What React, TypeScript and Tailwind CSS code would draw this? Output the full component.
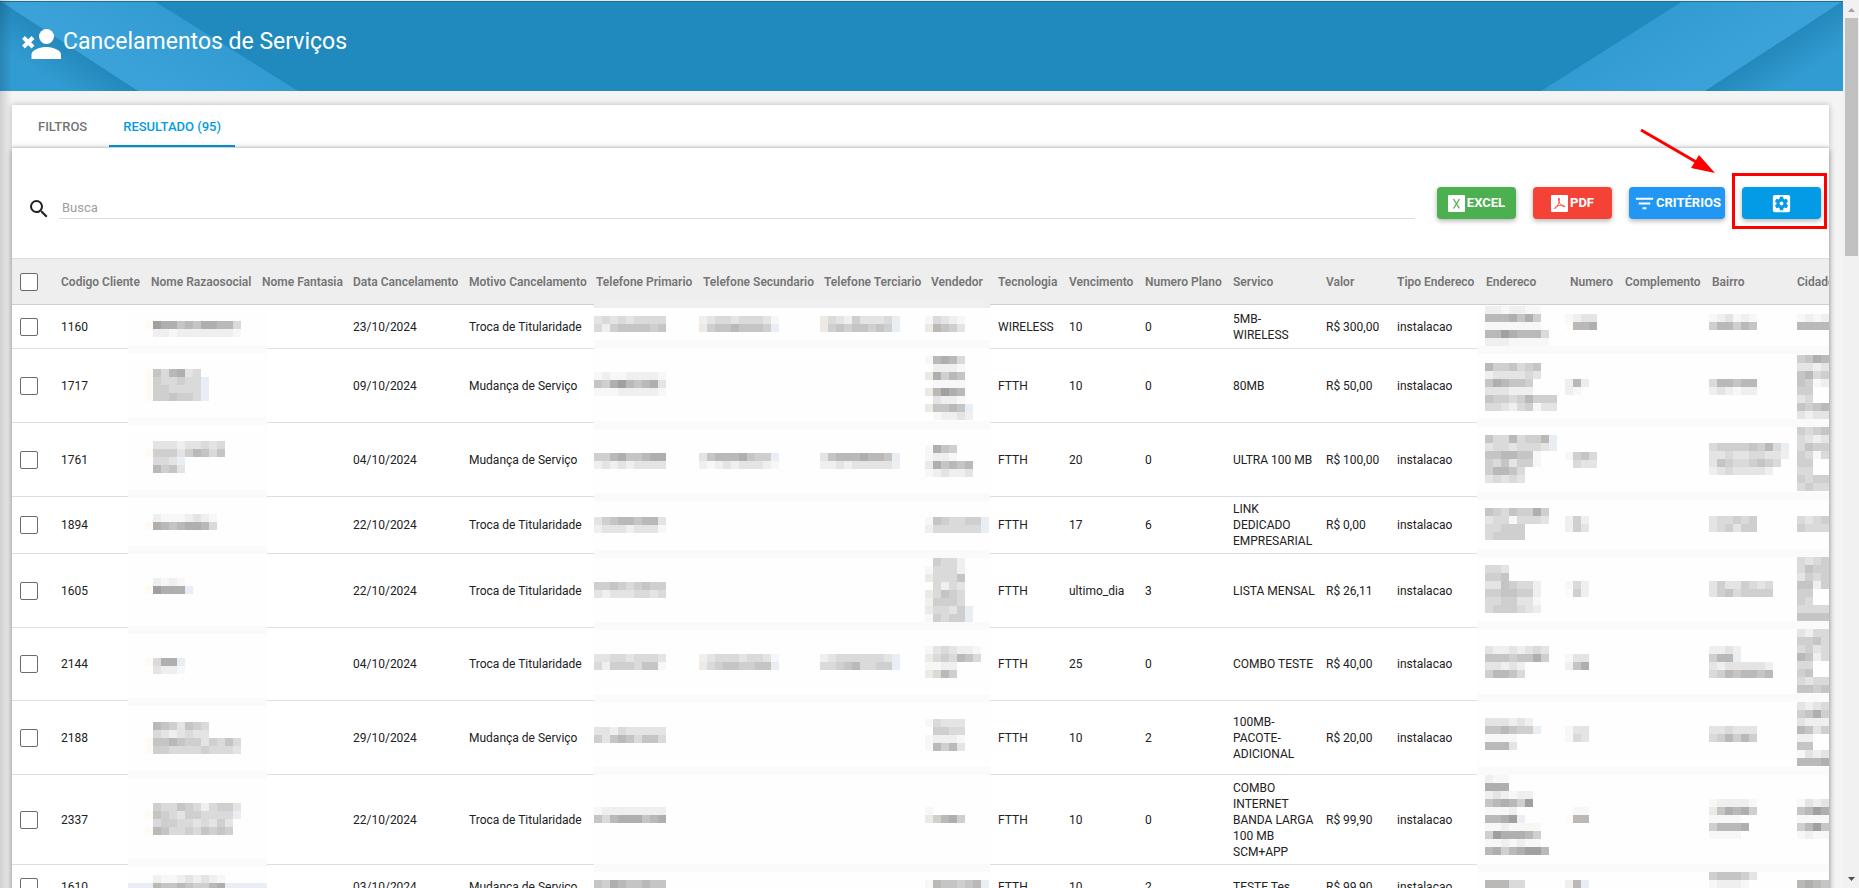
import { useState } from 'react';
import { MdFilterList, MdSearch, MdSettingsApplications } from 'react-icons/md';

interface Column {
  label: string;
  width: string;
}

interface Row {
  codigo: string;
  data: string;
  motivo: string;
  tecnologia: string;
  vencimento: string;
  plano: string;
  servico: string;
  valor: string;
  height: string;
}

const columns: Column[] = [
  { label: 'Codigo Cliente', width: 'w-[90px]' },
  { label: 'Nome Razaosocial', width: 'w-[111px]' },
  { label: 'Nome Fantasia', width: 'w-[91px]' },
  { label: 'Data Cancelamento', width: 'w-[116px]' },
  { label: 'Motivo Cancelamento', width: 'w-[127px]' },
  { label: 'Telefone Primario', width: 'w-[107px]' },
  { label: 'Telefone Secundario', width: 'w-[121px]' },
  { label: 'Telefone Terciario', width: 'w-[107px]' },
  { label: 'Vendedor', width: 'w-[67px]' },
  { label: 'Tecnologia', width: 'w-[71px]' },
  { label: 'Vencimento', width: 'w-[76px]' },
  { label: 'Numero Plano', width: 'w-[88px]' },
  { label: 'Servico', width: 'w-[93px]' },
  { label: 'Valor', width: 'w-[71px]' },
  { label: 'Tipo Endereco', width: 'w-[89px]' },
  { label: 'Endereco', width: 'w-[84px]' },
  { label: 'Numero', width: 'w-[55px]' },
  { label: 'Complemento', width: 'w-[87px]' },
  { label: 'Bairro', width: 'w-[85px]' },
  { label: 'Cidade', width: 'w-[70px]' },
];

const TROCA = 'Troca de Titularidade';
const MUDANCA = 'Mudança de Serviço';

const rows: Row[] = [
  { codigo: '1160', data: '23/10/2024', motivo: TROCA, tecnologia: 'WIRELESS', vencimento: '10', plano: '0', servico: '5MB-WIRELESS', valor: 'R$ 300,00', height: 'h-11' },
  { codigo: '1717', data: '09/10/2024', motivo: MUDANCA, tecnologia: 'FTTH', vencimento: '10', plano: '0', servico: '80MB', valor: 'R$ 50,00', height: 'h-[74px]' },
  { codigo: '1761', data: '04/10/2024', motivo: MUDANCA, tecnologia: 'FTTH', vencimento: '20', plano: '0', servico: 'ULTRA 100 MB', valor: 'R$ 100,00', height: 'h-[74px]' },
  { codigo: '1894', data: '22/10/2024', motivo: TROCA, tecnologia: 'FTTH', vencimento: '17', plano: '6', servico: 'LINK DEDICADO EMPRESARIAL', valor: 'R$ 0,00', height: 'h-[57px]' },
  { codigo: '1605', data: '22/10/2024', motivo: TROCA, tecnologia: 'FTTH', vencimento: 'ultimo_dia', plano: '3', servico: 'LISTA MENSAL', valor: 'R$ 26,11', height: 'h-[74px]' },
  { codigo: '2144', data: '04/10/2024', motivo: TROCA, tecnologia: 'FTTH', vencimento: '25', plano: '0', servico: 'COMBO TESTE', valor: 'R$ 40,00', height: 'h-[73px]' },
  { codigo: '2188', data: '29/10/2024', motivo: MUDANCA, tecnologia: 'FTTH', vencimento: '10', plano: '2', servico: '100MB-PACOTE-ADICIONAL', valor: 'R$ 20,00', height: 'h-[74px]' },
  { codigo: '2337', data: '22/10/2024', motivo: TROCA, tecnologia: 'FTTH', vencimento: '10', plano: '0', servico: 'COMBO INTERNET BANDA LARGA 100 MB SCM+APP', valor: 'R$ 99,90', height: 'h-[90px]' },
  { codigo: '1610', data: '03/10/2024', motivo: MUDANCA, tecnologia: 'FTTH', vencimento: '10', plano: '2', servico: 'TESTE Tes', valor: 'R$ 99,90', height: 'h-11' },
];

// Tile shades: 1 (lightest) to 9 (darkest), plus tinted ones
const shades: Record<string, string> = {
  '1': '#f7f7f7',
  '2': '#efefef',
  '3': '#e4e4e4',
  '4': '#dadada',
  '5': '#cfcfcf',
  '6': '#c5c5c6',
  '7': '#bab9b8',
  '8': '#afafb0',
  '9': '#a09fa1',
  o: '#fffaf4',
  w: '#efe9e4',
  b: '#e9eef5',
};

type Tile = [x: number, y: number, lines: string[]];

const TILE = 8;

const masks: { x: number; y: number; width: number; bands: number[]; tiles: Tile[] }[] = [
  {
    x: 116,
    y: 54,
    width: 139,
    bands: [87, 159, 232, 288, 368, 440, 513, 601],
    tiles: [
      [133, 63, ['o98867688774', '.22122222221']],
      [133, 111, ['o647834', 'o544544b', 'o554444b', 'o556554b']],
      [133, 183, ['.333233434', 'o555357646', '.443b', '.7563']],
      [133, 256, ['.21112321', 'o87678874']],
      [133, 320, ['.2121', 'o9888b']],
      [133, 400, ['o488b', '.3221']],
      [133, 464, ['.7653654', '.4323433', 'o66765535464', 'o55444454443']],
      [133, 545, ['.54465424553', 'o6543554444b', '.4554434353', 'o7644546565']],
      [133, 617, ['.211232321', '.766765578']],
    ],
  },
  {
    x: 582,
    y: 42,
    width: 396,
    bands: [82, 163, 235, 292, 364, 437, 509, 606],
    tiles: [
      [582, 58, ['343434444', '425666656']],
      [582, 114, ['121122221', '658976783', '111222221']],
      [582, 195, ['557866788', '232323333']],
      [582, 259, ['356776773', '233323331']],
      [582, 324, ['556545655', '323334434']],
      [582, 396, ['334434443', '425554661']],
      [582, 469, ['332433333', '536764664']],
      [582, 549, ['122222222', '647888678']],
      [582, 622, ['658766766']],
      [687, 58, ['2344344431', 'w56676665b']],
      [687, 195, ['367778655b', '2123233321']],
      [687, 396, ['2344434431', 'w45665566b']],
      [808, 58, ['w43253334b', 'w56566565b']],
      [808, 195, ['367778776b', '2232333332']],
      [808, 396, ['234444443b', '445674455b']],
      [913, 58, ['14321', 'w7653']],
      [913, 98, ['17874', '.2221', 'w8576', '.1111', 'w7987', '.3221', 'w6676b', '.12232']],
      [913, 187, ['1865', '1221', 'w86767', '123223']],
      [913, 259, ['1654455b', '2444444b']],
      [913, 300, ['.5442', '14442', 'w4446', '.4243', 'w4654', '25554', 'w4435b', '15455b']],
      [913, 388, ['1343221', 'w454764', '1122', 'w475']],
      [913, 461, ['14333', '.5544', '12221', '17573']],
      [913, 549, ['1', 'w5785']],
      [913, 622, ['1766567b']],
    ],
  },
  {
    x: 1465,
    y: 47,
    width: 395,
    bands: [88, 161, 234, 291, 363, 436, 509, 606],
    tiles: [
      [1473, 48, ['2212211', '7778685', '1111111', '77987774', '22211111']],
      [1473, 105, ['7556456', '2333343', '687665', '333222', '655457555', '443245133']],
      [1473, 177, ['64474557b', '34434443b', '6677661', '5463551', '57764', '34343']],
      [1473, 250, ['65465585', '34414443', '44555', '45555']],
      [1473, 307, ['443', '556', '3365442', '5566552', '4455331', '455543b']],
      [1473, 388, ['32232343', '66656685', '33232', '57764']],
      [1473, 460, ['333232', '667655b', '1111', '7773']],
      [1473, 517, ['211', '888', '232122', '678759', '1112', '7789b', '1121111', '5988875', '1121211', '78578997']],
      [1473, 622, ['77744']],
      [1553, 56, ['1233', 'o778']],
      [1553, 121, ['27b', '21']],
      [1553, 194, ['1564', '.433']],
      [1553, 258, ['252', '253']],
      [1553, 323, ['142', 'o52']],
      [1553, 396, ['133', '268']],
      [1553, 468, ['133', '143']],
      [1553, 549, ['.11', 'o77']],
      [1553, 622, ['27b']],
      [1697, 56, ['123121', '577576']],
      [1697, 121, ['477677', '232122']],
      [1697, 185, ['455556574b', '3343344332', '365445654', '23433332']],
      [1697, 258, ['344545', '345355']],
      [1697, 323, ['35335434', '35645555']],
      [1697, 388, ['2232', '577b', '32333332', '45767767']],
      [1697, 468, ['334333', '457575']],
      [1697, 541, ['122221', 'w68785', '1111', '57778', '1111']],
      [1697, 614, ['566653', '12221']],
      [1785, 56, ['1212', '7777']],
      [1785, 97, ['5687', '3323', '6745', '6512', '55', '34', '6567', '3233']],
      [1785, 169, ['5456', '4323', '4655', '5414', '55', '44', '5455', '4544']],
      [1785, 258, ['4345', '5444']],
      [1785, 299, ['4345', '4655', '3545', '6625', '55', '54', '4444', '6666']],
      [1785, 371, ['3244', '5564', '4534', '7624', '44', '56', '4344', '6656']],
      [1785, 444, ['3234', '5685', '3222', '7635', '22', '66', '1323', '7778']],
      [1785, 541, ['1323', '6798', '1111', '5796', '1211']],
      [1785, 622, ['7876']],
    ],
  },
];

// Pixelated areas that hide the customers' personal data
const PrivacyMask = () => (
  <svg className="pointer-events-none absolute left-0 top-0" width="1860" height="640" shapeRendering="crispEdges" aria-hidden="true">
    {masks.map((mask) => (
      <g key={mask.x}>
        <rect x={mask.x} y={mask.y} width={mask.width} height={640} fill="#fefefe" />
        {mask.y === 42 && <rect x={mask.x} y={mask.y} width={mask.width} height={TILE} fill="#efefef" />}
        {mask.bands.map((y) => (
          <rect key={y} x={mask.x} y={y} width={mask.width} height={TILE} fill="#fafafa" />
        ))}
        {mask.x === 116 && <rect x={mask.x} y={625} width={mask.width} height={TILE} fill="#e9eef5" />}
        {mask.tiles.map(([x, y, lines]) =>
          lines.map((line, i) =>
            line.split('').map((shade, j) =>
              shades[shade] ? (
                <rect
                  key={`${x}-${y}-${i}-${j}`}
                  x={x + j * TILE}
                  y={y + i * TILE}
                  width={TILE}
                  height={TILE}
                  fill={shades[shade]}
                />
              ) : null
            )
          )
        )}
      </g>
    ))}
  </svg>
);

const HeaderStripes = ({ className, flip }: { className: string; flip?: boolean }) => {
  const id = flip ? 'right' : 'left';
  return (
    <svg className={className} width="304" height="90" viewBox="0 0 304 90" aria-hidden="true">
      <defs>
        <linearGradient id={`edge-${id}`} gradientUnits="userSpaceOnUse" x1="70" y1="45" x2="48" y2="78">
          <stop offset="0" stopColor="#2488bb" />
          <stop offset="1" stopColor="#319cd2" />
        </linearGradient>
        <linearGradient id={`band-${id}`} gradientUnits="userSpaceOnUse" x1="200" y1="0" x2="150" y2="80">
          <stop offset="0" stopColor="#3099cf" />
          <stop offset="1" stopColor="#3aa2d8" />
        </linearGradient>
      </defs>
      <g transform={flip ? 'translate(304 0) scale(-1 1)' : undefined}>
        <path d={flip ? 'M0 0H160L302 90H0Z' : 'M0 0H154L298 90H0Z'} fill={`url(#band-${id})`} />
        <path d="M0 0L138 90H0Z" fill={`url(#edge-${id})`} />
      </g>
    </svg>
  );
};

const PersonRemoveIcon = () => (
  <svg width="40" height="30" viewBox="0 0 40 30" fill="#fff" aria-hidden="true">
    <circle cx="24.500" cy="7.500" r="7.500" />
    <path d="M9.500 30V25.500C9.500 20.500 19 18 24.200 18S39 20.500 39 25.500V30Z" />
    <path d="M1.500 8.500L11 18M11 8.500L1.500 18" stroke="#fff" strokeWidth="4" fill="none" />
  </svg>
);

const ExcelIcon = () => (
  <svg width="17" height="17" viewBox="0 0 17 17" aria-hidden="true">
    <rect width="17" height="17" rx="1" fill="#fff" />
    <path d="M5.500 4L11.500 13.500M11.500 4L5.500 13.500" stroke="#4caf50" strokeWidth="1.300" />
  </svg>
);

const PdfIcon = () => (
  <svg width="17" height="17" viewBox="0 0 17 17" aria-hidden="true">
    <rect width="17" height="17" rx="1" fill="#fff" />
    <path
      d="M8 3C7 3 7.500 6 9 8.500C10.500 10.500 12.500 12 13.700 11.700C14.500 11 12.500 10 9.500 10.300C7 10.500 4 12 3.300 13.300C3.500 14.500 5.500 12.500 7 9.500C8 7.500 9 3.500 8 3Z"
      stroke="#f44336"
      strokeWidth="0.900"
      fill="none"
    />
  </svg>
);

const buttonClass =
  'flex h-8 items-center justify-center rounded text-[13px] font-bold text-white shadow-[0_2px_5px_rgba(0,0,0,0.3)]';

const Checkbox = ({ label }: { label: string }) => (
  <input
    type="checkbox"
    aria-label={label}
    className="block size-[18px] appearance-none rounded-xs border border-[#6b6b6b] bg-white checked:bg-[#039be5]"
  />
);

const App = () => {
  const [tab, setTab] = useState('resultado');
  const [busca, setBusca] = useState('');

  const tabClass = (name: string) =>
    `h-full border-b-2 px-[14px] pt-1 text-[13px] font-medium ${
      tab === name ? 'border-[#039be5] text-[#039be5]' : 'border-transparent text-[#757575]'
    }`;

  return (
    <div className="flex h-screen overflow-hidden bg-[#f4f4f4] font-[Roboto,sans-serif] text-[#212121]">
      <div className="relative flex min-w-0 flex-1 flex-col">
        <header className="relative flex h-[91px] shrink-0 items-start overflow-hidden border-t border-[#e4ecef] bg-[#208abf] pl-[22px] pt-7">
          <HeaderStripes className="absolute left-0 top-0" />
          <HeaderStripes className="absolute right-0 top-0" flip />
          <div className="absolute inset-x-0 top-0 h-px bg-[#1d6f98]" />
          <h1 className="relative flex items-start gap-px text-[23px] leading-[26px] text-white">
            <PersonRemoveIcon />
            <span>Cancelamentos de Serviços</span>
          </h1>
        </header>

        <main className="mr-[14px] mt-[14px] min-h-0 flex-1 pl-3">
          <div className="flex h-[42px] items-center gap-2 bg-white pl-3 shadow-[0_0_6px_rgba(0,0,0,0.25)]" role="tablist">
            <button role="tab" aria-selected={tab === 'filtros'} className={tabClass('filtros')} onClick={() => setTab('filtros')}>
              FILTROS
            </button>
            <button role="tab" aria-selected={tab === 'resultado'} className={tabClass('resultado')} onClick={() => setTab('resultado')}>
              RESULTADO (95)
            </button>
          </div>

          <section className="relative h-full border-t border-[#d0d0d0] bg-white shadow-[0_2px_6px_rgba(0,0,0,0.5)]">
            {/* Toolbar */}
            <div className="flex h-[110px] items-center pl-[15px] pr-2">
              <label htmlFor="busca" className="mt-3 mr-2">
                <MdSearch size={24} aria-label="Busca" />
              </label>
              <input
                id="busca"
                type="text"
                placeholder="Busca"
                value={busca}
                onChange={(e) => setBusca(e.target.value)}
                className="h-8 min-w-0 flex-1 border-b border-[#dedede] px-[3px] pt-2.5 text-[13px] outline-none placeholder:text-[#9e9e9e]"
              />
              <div className="ml-[22px] flex gap-[17px]">
                <button className={`${buttonClass} w-[79px] gap-[2px] bg-[#4caf50]`}>
                  <ExcelIcon />
                  EXCEL
                </button>
                <button className={`${buttonClass} w-[79px] gap-[2px] bg-[#f44336]`}>
                  <PdfIcon />
                  PDF
                </button>
                <button className={`${buttonClass} w-24 bg-[#2196f3]`}>
                  <MdFilterList size={23} />
                  CRITÉRIOS
                </button>
                <div className="relative">
                  <button aria-label="Configurações" className={`${buttonClass} w-[79px] bg-[#039be5]`}>
                    <MdSettingsApplications size={23} />
                  </button>
                  <div className="pointer-events-none absolute -bottom-2.5 -left-2.5 -right-1.5 -top-3.5 border-3 border-[#ff0000]" />
                  <svg className="pointer-events-none absolute -left-[102px] -top-[58px]" width="76" height="46" viewBox="0 0 76 46" aria-hidden="true">
                    <path d="M1 1L58 34" stroke="#ff0000" strokeWidth="3" />
                    <path d="M75 44L59 26L51 39Z" fill="#ff0000" />
                  </svg>
                </div>
              </div>
            </div>

            {/* Results */}
            <div className="relative overflow-hidden">
              <table className="w-max table-fixed border-collapse text-xs">
                <thead>
                  <tr className="h-[46px] border-b border-t border-b-[#cfcfcf] border-t-[#dedede] bg-[#eeeeee] text-left text-[#757575]">
                    <th className="w-[42px] pl-2">
                      <Checkbox label="Selecionar todos" />
                    </th>
                    {columns.map((column) => (
                      <th key={column.label} className={`${column.width} whitespace-nowrap pl-[7px] font-semibold`}>
                        {column.label}
                      </th>
                    ))}
                  </tr>
                </thead>
                <tbody>
                  {rows.map((row) => (
                    <tr key={row.codigo} className={`${row.height} border-b border-[#dedede] leading-4`}>
                      <td className="pl-2">
                        <Checkbox label={`Selecionar ${row.codigo}`} />
                      </td>
                      <td className="pl-[7px]">{row.codigo}</td>
                      <td />
                      <td />
                      <td className="pl-[7px]">{row.data}</td>
                      <td className="pl-[7px]">{row.motivo}</td>
                      <td />
                      <td />
                      <td />
                      <td />
                      <td className="pl-[7px]">{row.tecnologia}</td>
                      <td className="pl-[7px]">{row.vencimento}</td>
                      <td className="pl-[7px]">{row.plano}</td>
                      <td className="pl-[7px] pr-1">{row.servico}</td>
                      <td className="pl-[7px]">{row.valor}</td>
                      <td className="pl-[7px]">instalacao</td>
                      <td />
                      <td />
                      <td />
                      <td />
                      <td />
                    </tr>
                  ))}
                </tbody>
              </table>
              <PrivacyMask />
            </div>
          </section>
        </main>
        <div className="pointer-events-none absolute inset-y-0 left-0 w-3 bg-linear-to-r from-black/15 to-transparent" />
      </div>

      {/* Scrollbar */}
      <div className="flex w-4 shrink-0 flex-col items-center bg-[#f1f1f1]" aria-hidden="true">
        <svg width="16" height="18" viewBox="0 0 16 18">
          <path d="M5 12L8.500 8L12 12Z" fill="#a3a3a3" />
        </svg>
        <div className="h-[238px] w-[13px] bg-[#c1c1c1]" />
        <svg className="mt-auto" width="16" height="18" viewBox="0 0 16 18">
          <path d="M5 7L8.500 11L12 7Z" fill="#505050" />
        </svg>
      </div>
    </div>
  );
};

export default App;
